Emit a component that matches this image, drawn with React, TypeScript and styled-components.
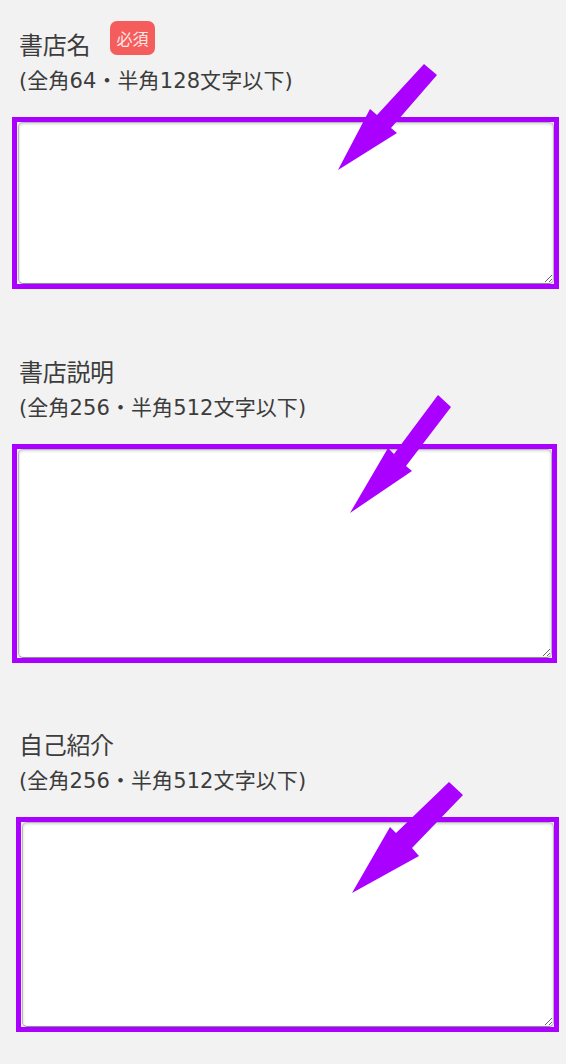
import React from 'react'
import styled, { createGlobalStyle } from 'styled-components'

const GlobalStyle = createGlobalStyle`
  html, body {
    margin: 0;
    padding: 0;
    background: #f2f2f2;
  }
  body {
    font-family: "Noto Sans CJK JP", "Noto Sans", sans-serif;
    color: #3c3c3c;
  }
`

const Page = styled.div`
  position: relative;
  width: 566px;
  min-height: 1064px;
  padding-top: 27px;
  box-sizing: border-box;
  background: #f2f2f2;
`

const Section = styled.section<{ $gap: number }>`
  display: flex;
  flex-direction: column;
  margin-bottom: ${(p) => p.$gap}px;
`

const LabelRow = styled.div`
  display: flex;
  align-items: flex-start;
  padding-left: 19px;
  height: 34px;
`

const Label = styled.span`
  font-size: 24px;
  line-height: 34px;
  letter-spacing: -0.3px;
  color: #3c3c3c;
`

const Required = styled.span`
  margin-left: 20px;
  margin-top: -6px;
  width: 45px;
  height: 34px;
  border-radius: 7px;
  background: #f55c5c;
  color: #ffe6e6;
  font-size: 16px;
  display: flex;
  align-items: center;
  justify-content: center;
`

const Note = styled.div`
  margin-top: 6px;
  padding-left: 19px;
  font-family: "DejaVu Sans", "Noto Sans CJK JP", sans-serif;
  font-size: 21px;
  line-height: 28px;
  letter-spacing: 0.1px;
  color: #3c3c3c;
`

const Frame = styled.div<{ $left: number; $width: number; $height: number }>`
  margin-top: 22px;
  margin-left: ${(p) => p.$left}px;
  width: ${(p) => p.$width}px;
  height: ${(p) => p.$height}px;
  border: 5px solid #aa00ff;
  box-sizing: border-box;
  display: flex;
`

const TextArea = styled.textarea`
  flex: 1;
  margin: 0 0 0 1px;
  padding: 6px;
  border: 1px solid #b8b8b8;
  border-bottom-color: #8c8c8c;
  border-radius: 5px;
  background: #fff;
  box-shadow: inset 0 1px 3px rgba(0, 0, 0, 0.18);
  outline: none;
  font-family: inherit;
  font-size: 16px;
`

const Overlay = styled.svg`
  position: absolute;
  left: 0;
  top: 0;
  width: 566px;
  height: 1064px;
  pointer-events: none;
`

type Field = {
  label: string
  note: string
  required?: boolean
  frame: { left: number; width: number; height: number }
  gap: number
}

const fields: Field[] = [
  {
    label: '書店名',
    note: '(全角64・半角128文字以下)',
    required: true,
    frame: { left: 12, width: 547, height: 172 },
    gap: 65,
  },
  {
    label: '書店説明',
    note: '(全角256・半角512文字以下)',
    frame: { left: 12, width: 545, height: 219 },
    gap: 64,
  },
  {
    label: '自己紹介',
    note: '(全角256・半角512文字以下)',
    frame: { left: 16, width: 543, height: 215 },
    gap: 0,
  },
]

const arrows = [
  '424,64 437,75 391,128 397,133 338,170 370,109 377,115',
  '438,395 451,407 406,466 412,471 350,513 388,448 394,454',
  '449,782 463,795 412,848 419,856 352,893 390,827 396,833',
]

export default function App() {
  return (
    <>
      <GlobalStyle />
      <Page>
        {fields.map((f) => (
          <Section key={f.label} $gap={f.gap}>
            <LabelRow>
              <Label>{f.label}</Label>
              {f.required && <Required>必須</Required>}
            </LabelRow>
            <Note>{f.note}</Note>
            <Frame $left={f.frame.left} $width={f.frame.width} $height={f.frame.height}>
              <TextArea />
            </Frame>
          </Section>
        ))}
        <Overlay viewBox="0 0 566 1064">
          {arrows.map((pts) => (
            <polygon key={pts} points={pts} fill="#aa00ff" />
          ))}
        </Overlay>
      </Page>
    </>
  )
}
